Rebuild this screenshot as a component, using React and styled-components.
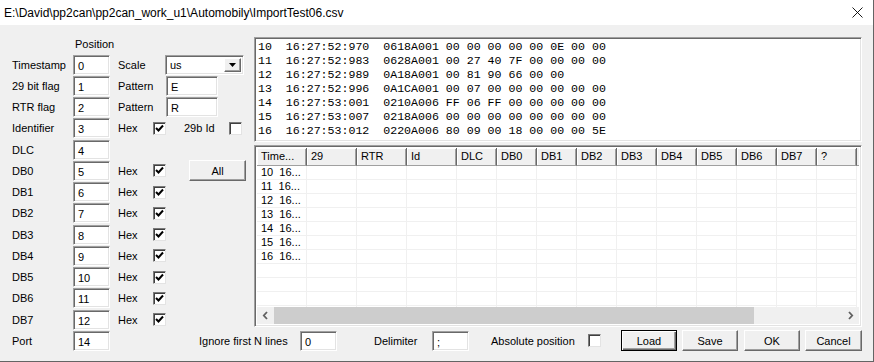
import React from "react";
import styled, { createGlobalStyle } from "styled-components";

const GlobalStyle = createGlobalStyle`
  body {
    margin: 0;
    background: #ffffff;
    font-family: "Liberation Sans", Arial, sans-serif;
    font-size: 11px;
    color: #000;
  }
`;

const Window = styled.div`
  width: 874px;
  height: 362px;
  box-sizing: border-box;
  border-right: 1px solid #646464;
  border-bottom: 1px solid #646464;
  background: #f0f0f0;
  display: flex;
  flex-direction: column;
  overflow: hidden;
`;

const TitleBar = styled.div`
  height: 25px;
  flex-shrink: 0;
  background: #ffffff;
  display: flex;
  align-items: center;
  justify-content: space-between;
  padding: 0 10px 0 4px;
  font-size: 12px;
`;

const Body = styled.div`
  flex: 1;
  display: flex;
  flex-direction: column;
  padding-top: 12px;
`;

const Main = styled.div`
  display: flex;
`;

const LeftPanel = styled.div`
  width: 254px;
  flex-shrink: 0;
  box-sizing: border-box;
  padding-left: 12px;
  display: flex;
  flex-direction: column;
`;

const PositionHead = styled.div`
  height: 17px;
  line-height: 14px;
  padding-left: 63px;
`;

const FormRow = styled.div`
  height: 21.25px;
  display: flex;
  align-items: center;
`;

const Label = styled.span`
  width: ${(p) => p.$w || 61}px;
  margin-left: ${(p) => p.$ml || 0}px;
  flex-shrink: 0;
  white-space: nowrap;
`;

const Field = styled.div`
  width: ${(p) => p.$w || 37}px;
  height: 20px;
  margin-left: ${(p) => p.$ml || 0}px;
  flex-shrink: 0;
  box-sizing: border-box;
  background: #ffffff;
  border: 1px solid;
  border-color: #a0a0a0 #ffffff #ffffff #a0a0a0;
  box-shadow: inset 1px 1px 0 #696969, inset -1px -1px 0 #e3e3e3;
  padding: 2px 0 0 4px;
  line-height: 16px;
`;

const Select = styled(Field)`
  display: flex;
  justify-content: space-between;
  padding: 2px 2px 2px 4px;
  line-height: 14px;
`;

const DropButton = styled.span`
  width: 17px;
  height: 14px;
  box-sizing: border-box;
  background: #f0f0f0;
  border: 1px solid;
  border-color: #ffffff #696969 #696969 #ffffff;
  box-shadow: inset -1px -1px 0 #a0a0a0;
  display: flex;
  align-items: center;
  justify-content: center;
`;

const CheckBox = styled.span`
  width: 13px;
  height: 13px;
  margin-left: ${(p) => p.$ml || 0}px;
  flex-shrink: 0;
  box-sizing: border-box;
  background: #ffffff;
  border: 1px solid;
  border-color: #7a7a7a #e3e3e3 #e3e3e3 #7a7a7a;
  box-shadow: inset 1px 1px 0 #404040;
  display: flex;
  align-items: center;
  justify-content: center;
`;

const Button = styled.button`
  width: ${(p) => p.$w || 56}px;
  height: 21px;
  margin-left: ${(p) => p.$ml || 0}px;
  flex-shrink: 0;
  padding: 0;
  box-sizing: border-box;
  background: #f0f0f0;
  font-family: "Liberation Sans", Arial, sans-serif;
  font-size: 11px;
  color: #000;
  border: 1px solid;
  border-color: ${(p) =>
    p.$default ? "#000000" : "#ffffff #696969 #696969 #ffffff"};
  box-shadow: ${(p) =>
    p.$default
      ? "inset 1px 1px 0 #ffffff, inset -1px -1px 0 #696969, inset -2px -2px 0 #a0a0a0"
      : "inset -1px -1px 0 #a0a0a0"};
`;

const RightPanel = styled.div`
  width: 608px;
  flex-shrink: 0;
  display: flex;
  flex-direction: column;
  gap: 3px;
`;

const Sunken = styled.div`
  box-sizing: border-box;
  background: #ffffff;
  border: 1px solid;
  border-color: #a0a0a0 #ffffff #ffffff #a0a0a0;
  box-shadow: inset 1px 1px 0 #696969, inset -1px -1px 0 #e3e3e3;
  padding: 2px;
  overflow: hidden;
`;

const RawBox = styled(Sunken)`
  height: 105px;
  padding: 2px 2px 0 3px;
  font-family: "Liberation Mono", "Courier New", monospace;
  font-size: 11.6px;
`;

const RawLine = styled.div`
  height: 14px;
  line-height: 14px;
  white-space: pre;
`;

const GridBox = styled(Sunken)`
  height: 182px;
  display: flex;
  flex-direction: column;
`;

const GridHeader = styled.div`
  display: flex;
  height: 18px;
  flex-shrink: 0;
`;

const HeadCell = styled.div`
  width: ${(p) => p.$w}px;
  flex-shrink: 0;
  box-sizing: border-box;
  background: #f0f0f0;
  padding-left: 4px;
  line-height: 17px;
  border-right: 1px solid #696969;
  border-bottom: 1px solid #a0a0a0;
  box-shadow: inset 1px 1px 0 #ffffff, inset -1px 0 0 #a0a0a0;
`;

const HeadFiller = styled.div`
  flex: 1;
  background: #f0f0f0;
  border-bottom: 1px solid #a0a0a0;
`;

const GridBody = styled.div`
  flex: 1;
  overflow: hidden;
`;

const BodyRow = styled.div`
  display: flex;
  height: 14px;
`;

const Cell = styled.div`
  width: ${(p) => p.$w}px;
  flex-shrink: 0;
  box-sizing: border-box;
  padding-left: 4px;
  line-height: 13px;
  white-space: pre;
  border-right: 1px solid #f0f0f0;
  border-bottom: 1px solid #f0f0f0;
`;

const ScrollBar = styled.div`
  height: 17px;
  flex-shrink: 0;
  display: flex;
  background: #f0f0f0;
`;

const ScrollArrow = styled.div`
  width: 17px;
  flex-shrink: 0;
  display: flex;
  align-items: center;
  justify-content: center;
`;

const ScrollTrack = styled.div`
  flex: 1;
  display: flex;
  align-items: center;
`;

const ScrollThumb = styled.div`
  width: 480px;
  height: 17px;
  background: #cdcdcd;
`;

const BottomBar = styled.div`
  height: 21px;
  display: flex;
  align-items: center;
  padding-left: 12px;
`;

const Check = () => (
  <svg width="9" height="9" viewBox="0 0 9 9">
    <polyline points="1,4 3.5,6.5 8,1.5" fill="none" stroke="#000" strokeWidth="2" />
  </svg>
);

const Chevron = ({ left }) => (
  <svg width="7" height="9" viewBox="0 0 7 9">
    <polyline
      points={left ? "5,1 1.8,4.5 5,8" : "2,1 5.2,4.5 2,8"}
      fill="none"
      stroke="#606060"
      strokeWidth="1.8"
    />
  </svg>
);

const rawLines = [
  "10  16:27:52:970  0618A001 00 00 00 00 00 0E 00 00",
  "11  16:27:52:983  0628A001 00 27 40 7F 00 00 00 00",
  "12  16:27:52:989  0A18A001 00 81 90 66 00 00",
  "13  16:27:52:996  0A1CA001 00 07 00 00 00 00 00 00",
  "14  16:27:53:001  0210A006 FF 06 FF 00 00 00 00 00",
  "15  16:27:53:007  0218A006 00 00 00 00 00 00 00 00",
  "16  16:27:53:012  0220A006 80 09 00 18 00 00 00 5E",
];

const columns = [
  ["Time...", 50], ["29", 50], ["RTR", 50], ["Id", 50], ["DLC", 40],
  ["DB0", 40], ["DB1", 40], ["DB2", 40], ["DB3", 40], ["DB4", 40],
  ["DB5", 40], ["DB6", 40], ["DB7", 40], ["?", 40],
];

const dataBytes = ["DB0", "DB1", "DB2", "DB3", "DB4", "DB5", "DB6", "DB7"];

export default function App() {
  return (
    <Window>
      <GlobalStyle />
      <TitleBar>
        <span>{"E:\\David\\pp2can\\pp2can_work_u1\\Automobily\\ImportTest06.csv"}</span>
        <svg width="11" height="11" viewBox="0 0 11 11">
          <path d="M0.5 0.5 L10.5 10.5 M10.5 0.5 L0.5 10.5" stroke="#000" strokeWidth="0.9" />
        </svg>
      </TitleBar>

      <Body>
        <Main>
          <LeftPanel>
            <PositionHead>Position</PositionHead>

            <FormRow>
              <Label>Timestamp</Label>
              <Field>0</Field>
              <Label $ml={8} $w={47}>Scale</Label>
              <Select $w={79}>
                <span>us</span>
                <DropButton>
                  <svg width="7" height="4" viewBox="0 0 7 4">
                    <polygon points="0,0 7,0 3.5,4" fill="#000" />
                  </svg>
                </DropButton>
              </Select>
            </FormRow>

            <FormRow>
              <Label>29 bit flag</Label>
              <Field>1</Field>
              <Label $ml={8} $w={48}>Pattern</Label>
              <Field $w={52}>E</Field>
            </FormRow>

            <FormRow>
              <Label>RTR flag</Label>
              <Field>2</Field>
              <Label $ml={8} $w={48}>Pattern</Label>
              <Field $w={52}>R</Field>
            </FormRow>

            <FormRow>
              <Label>Identifier</Label>
              <Field>3</Field>
              <Label $ml={8} $w={35}>Hex</Label>
              <CheckBox><Check /></CheckBox>
              <Label $ml={18} $w={45}>29b Id</Label>
              <CheckBox />
            </FormRow>

            <FormRow>
              <Label>DLC</Label>
              <Field>4</Field>
            </FormRow>

            {dataBytes.map((name, i) => (
              <FormRow key={name}>
                <Label>{name}</Label>
                <Field>{i + 5}</Field>
                <Label $ml={8} $w={35}>Hex</Label>
                <CheckBox><Check /></CheckBox>
                {i === 0 && <Button $ml={23} $w={57}>All</Button>}
              </FormRow>
            ))}
          </LeftPanel>

          <RightPanel>
            <RawBox>
              {rawLines.map((line) => (
                <RawLine key={line}>{line}</RawLine>
              ))}
            </RawBox>

            <GridBox>
              <GridHeader>
                {columns.map(([name, w]) => (
                  <HeadCell key={name} $w={w}>{name}</HeadCell>
                ))}
                <HeadFiller />
              </GridHeader>
              <GridBody>
                {Array.from({ length: 11 }).map((_, r) => (
                  <BodyRow key={r}>
                    {columns.map(([name, w]) => (
                      <Cell key={name} $w={w}>
                        {name === "Time..." && r < 7 ? `${10 + r}  16...` : ""}
                      </Cell>
                    ))}
                  </BodyRow>
                ))}
              </GridBody>
              <ScrollBar>
                <ScrollArrow><Chevron left /></ScrollArrow>
                <ScrollTrack><ScrollThumb /></ScrollTrack>
                <ScrollArrow><Chevron /></ScrollArrow>
              </ScrollBar>
            </GridBox>
          </RightPanel>
        </Main>

        <BottomBar>
          <Label>Port</Label>
          <Field>14</Field>
          <Label $ml={89} $w={101}>Ignore first N lines</Label>
          <Field>0</Field>
          <Label $ml={37} $w={58}>Delimiter</Label>
          <Field>;</Field>
          <Label $ml={22} $w={97}>Absolute position</Label>
          <CheckBox />
          <Button $default $ml={20}>Load</Button>
          <Button $ml={5}>Save</Button>
          <Button $ml={6}>OK</Button>
          <Button $ml={5} $w={57}>Cancel</Button>
        </BottomBar>
      </Body>
    </Window>
  );
}
